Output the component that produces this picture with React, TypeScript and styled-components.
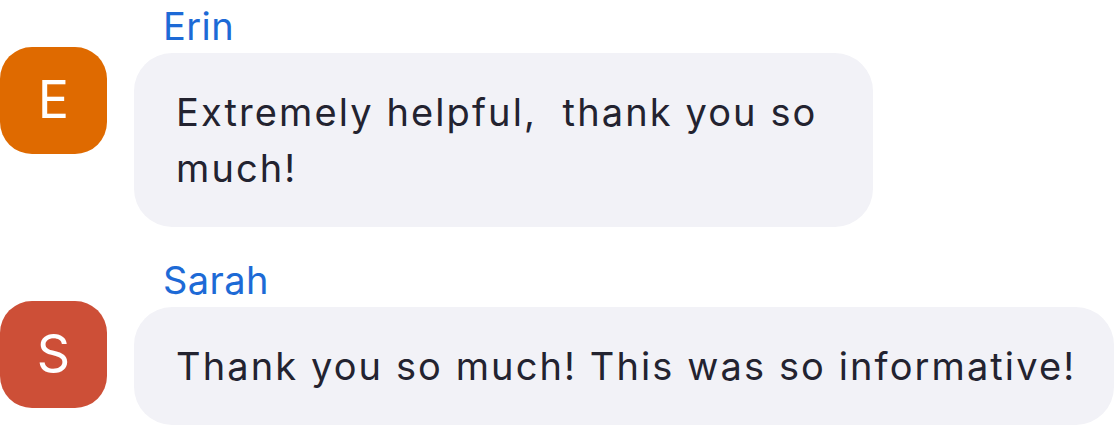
import React from "react";
import styled, { createGlobalStyle } from "styled-components";

const GlobalStyle = createGlobalStyle`
  html, body {
    margin: 0;
    padding: 0;
    background: #ffffff;
  }
  body {
    font-family: Inter, "Liberation Sans", Arial, sans-serif;
    -webkit-font-smoothing: antialiased;
  }
`;

const ChatList = styled.div`
  display: flex;
  flex-direction: column;
  gap: 31px;
  padding-top: 4px;
  width: 1118px;
  overflow: hidden;
`;

const MessageRow = styled.div`
  display: grid;
  grid-template-columns: 107px 1fr;
  column-gap: 27px;
  align-items: start;
`;

const Avatar = styled.div<{ color: string }>`
  width: 107px;
  height: 107px;
  margin-top: 43px;
  border-radius: 32px;
  background: ${(p) => p.color};
  color: #ffffff;
  display: flex;
  align-items: center;
  justify-content: center;
  font-size: 52px;
  font-weight: 400;
  padding-bottom: 2px;
  box-sizing: border-box;
`;

const Content = styled.div`
  display: flex;
  flex-direction: column;
  min-width: 0;
`;

const Name = styled.div`
  color: #1d6ad6;
  font-size: 38px;
  line-height: 44px;
  letter-spacing: 0.4px;
  margin-left: 29px;
  margin-bottom: 5px;
`;

const Bubble = styled.div<{ maxWidth?: string }>`
  box-sizing: border-box;
  width: fit-content;
  max-width: ${(p) => p.maxWidth || "100%"};
  background: #f2f2f7;
  border-radius: 38px;
  padding: 31px 38px 31px 42px;
  color: #232330;
  font-size: 38px;
  line-height: 56px;
  letter-spacing: 2.1px;
  white-space: pre-wrap;
`;

type Message = {
  name: string;
  initial: string;
  color: string;
  text: string;
  maxWidth?: string;
};

const messages: Message[] = [
  {
    name: "Erin",
    initial: "E",
    color: "#df6a00",
    text: "Extremely helpful,  thank you so much!",
    maxWidth: "739px",
  },
  {
    name: "Sarah",
    initial: "S",
    color: "#cd4f37",
    text: "Thank you so much! This was so informative!",
  },
];

export default function App() {
  return (
    <>
      <GlobalStyle />
      <ChatList>
        {messages.map((m) => (
          <MessageRow key={m.name}>
            <Avatar color={m.color}>{m.initial}</Avatar>
            <Content>
              <Name>{m.name}</Name>
              <Bubble maxWidth={m.maxWidth}>{m.text}</Bubble>
            </Content>
          </MessageRow>
        ))}
      </ChatList>
    </>
  );
}
